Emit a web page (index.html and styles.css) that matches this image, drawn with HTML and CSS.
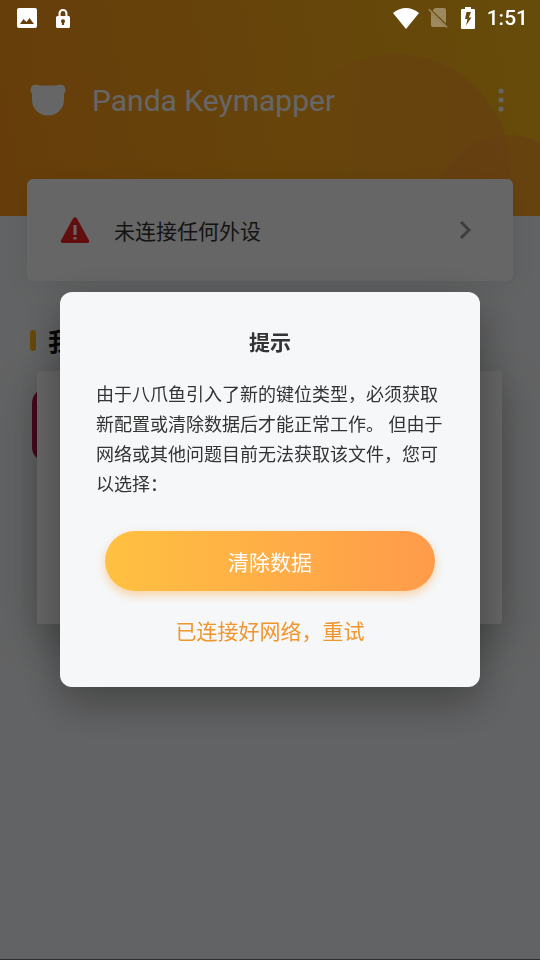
FILE: index.html
```
<!DOCTYPE html>
<html lang="zh-CN">
<head>
<meta charset="utf-8">
<meta name="viewport" content="width=device-width, initial-scale=1">
<title>Panda Keymapper</title>
<link rel="stylesheet" href="styles.css">
</head>
<body>
<div class="app">
  <header class="hero">
    <svg class="hero-art" viewBox="0 0 540 216" preserveAspectRatio="xMaxYMid slice" aria-hidden="true">
      <defs>
        <linearGradient id="orb" x1="0" y1="0" x2="1" y2="0">
          <stop offset="0" stop-color="#ffa028" stop-opacity="0"/>
          <stop offset="0.4" stop-color="#ffa028" stop-opacity=".5"/>
          <stop offset="1" stop-color="#ffa028" stop-opacity=".75"/>
        </linearGradient>
        <linearGradient id="orb2" x1="0" y1="0" x2="1" y2="0">
          <stop offset="0" stop-color="#ff9632" stop-opacity=".6"/>
          <stop offset="1" stop-color="#ffa523" stop-opacity=".8"/>
        </linearGradient>
      </defs>
      <circle cx="396" cy="168" r="114" fill="url(#orb)"/>
      <circle cx="508" cy="208" r="73" fill="url(#orb2)"/>
    </svg>
    <div class="toolbar">
      <svg class="panda" viewBox="0 0 36 32" aria-hidden="true">
        <circle cx="6" cy="6" r="5.500"/><circle cx="30" cy="6" r="5.500"/>
        <path d="M8 1.500H28L34 8V16A16 15.500 0 0 1 2 16V8Z"/>
      </svg>
      <h1 class="brand">Panda Keymapper</h1>
      <button class="more" type="button" aria-label="More">
        <svg viewBox="0 0 6 24"><circle cx="3" cy="3" r="2.500"/><circle cx="3" cy="12" r="2.500"/><circle cx="3" cy="21" r="2.500"/></svg>
      </button>
    </div>
  </header>
  <main class="content">
    <button class="device" type="button">
      <svg class="warn" viewBox="0 0 30 27" aria-hidden="true">
        <path d="M13 1.500Q15-1 17 1.500L28.800 23Q30 26 27 26H3Q0 26 1.200 23Z" fill="#f52323"/>
        <path d="M13.500 8h3v10h-3zM13.500 20h3v2.500h-3z" fill="#fff"/>
      </svg>
      <span class="device-label">未连接任何外设</span>
      <svg class="chevron" viewBox="0 0 12 20" aria-hidden="true"><path d="M2 2l8 8-8 8"/></svg>
    </button>
    <h2 class="section">我的</h2>
    <div class="games">
      <span class="game-icon"></span>
      <div class="sheet"></div>
    </div>
  </main>
</div>

<div class="scrim">
  <section class="dialog" role="dialog" aria-modal="true" aria-labelledby="dialog-title">
    <h2 class="dialog-title" id="dialog-title">提示</h2>
    <p class="dialog-text">由于八爪鱼引入了新的键位类型，必须获取新配置或清除数据后才能正常工作。 但由于网络或其他问题目前无法获取该文件，您可以选择：</p>
    <button class="primary" type="button">清除数据</button>
    <button class="retry" type="button">已连接好网络，重试</button>
  </section>
</div>

<div class="status">
  <svg class="s-image" viewBox="0 0 20 20"><path fill-rule="evenodd" d="M2 0H18Q20 0 20 2V18Q20 20 18 20H2Q0 20 0 18V2Q0 0 2 0ZM3 16H17L12.500 10L9.500 14L6.500 11Z"/></svg>
  <svg class="s-lock" viewBox="0 0 14 19"><path fill-rule="evenodd" d="M2.500 7V4.500a4.500 4.500 0 0 1 9 0V7H12.500Q14 7 14 8.500V17.500Q14 19 12.500 19H1.500Q0 19 0 17.500V8.500Q0 7 1.500 7ZM4.600 7H9.400V4.500a2.400 2.400 0 0 0-4.800 0ZM7 10.200a2 2 0 0 0-1.100 3.700V16H8.100V13.900A2 2 0 0 0 7 10.200Z"/></svg>
  <span class="spacer"></span>
  <svg class="s-wifi" viewBox="0 0 26 21"><path d="M13 21L0 5Q13-5 26 5Z"/></svg>
  <svg class="s-sim" viewBox="0 0 20 20"><path d="M7 0H16Q18 0 18 2V15.500L4.500 2.500ZM3 4.500L17 18.500Q16.500 19 16 19H5Q3 19 3 17Z"/><path d="M.8 1.200L19 19.400" fill="none" stroke="#fff" stroke-width="1.600"/></svg>
  <svg class="s-battery" viewBox="0 0 14 22"><path fill-rule="evenodd" d="M4 2V0H10V2H13Q14 2 14 3V21Q14 22 13 22H1Q0 22 0 21V3Q0 2 1 2ZM5.500 5L4 12H6.500L5 18.500L10.500 10.500H7.800L10 5Z"/></svg>
  <span class="clock">1:51</span>
</div>
</body>
</html>
```
FILE: styles.css
```
* { box-sizing: border-box; }

body {
  margin: 0;
  background: #f5f7f9;
  font-family: Roboto, "Noto Sans CJK SC", sans-serif;
  color: #333;
}

h1, h2, p { margin: 0; }

button {
  border: 0;
  padding: 0;
  background: none;
  font: inherit;
  color: inherit;
  cursor: pointer;
}

svg { display: block; flex: none; }

.app { min-height: 100vh; overflow: hidden; border-bottom: 1px solid #777; }

.hero {
  position: relative;
  height: 216px;
  padding: 72px 36px 0 30px;
  background: linear-gradient(80deg, #ff9919 0%, #ffaa19 50%, #ffbe19 100%);
}

.hero-art {
  position: absolute;
  inset: 0;
  width: 100%;
  height: 100%;
}

.toolbar {
  position: relative;
  display: flex;
  align-items: center;
  height: 56px;
  color: #fff;
}

.panda { width: 36px; height: 32px; fill: #fff; }

.brand {
  flex: 1;
  margin-left: 26px;
  font-size: 30px;
  font-weight: 400;
}

.more svg { width: 6px; height: 24px; fill: #fff; }

.content {
  position: relative;
  margin-top: -37px;
  padding: 0 27px;
}

.device {
  display: flex;
  align-items: center;
  width: 100%;
  height: 102px;
  padding: 0 42px 0 33px;
  border-radius: 6px;
  background: #fff;
  box-shadow: 0 3px 24px rgba(0, 0, 0, .08);
  text-align: left;
}

.warn { width: 30px; height: 27px; }

.device-label { flex: 1; margin-left: 24px; font-size: 21px; }

.chevron { width: 12px; height: 20px; fill: none; stroke: #999; stroke-width: 3; }

.section {
  display: flex;
  align-items: center;
  gap: 12px;
  height: 36px;
  margin: 41px 0 0 3px;
  font-size: 25px;
  font-weight: 700;
  color: #111;
}

.section::before {
  content: "";
  width: 6px;
  height: 21px;
  border-radius: 3px;
  background: #ffb419;
}

.games { position: relative; margin: 13px -16px 0 5px; padding-right: 27px; }

.game-icon {
  position: absolute;
  left: 0;
  top: 17px;
  width: 74px;
  height: 74px;
  border-radius: 15px;
  background: #b4144b;
}

.sheet {
  position: relative;
  height: 253px;
  margin-left: 5px;
  border-radius: 3px;
  background: #fff;
  box-shadow: 0 14px 44px rgba(0, 0, 0, .28);
}

.scrim {
  position: fixed;
  inset: 0;
  display: flex;
  align-items: center;
  justify-content: center;
  padding: 19px 60px 0;
  background: rgba(0, 0, 0, .6);
}

.dialog {
  display: flex;
  flex-direction: column;
  align-items: center;
  width: 100%;
  max-width: 420px;
  padding: 36px 36px 40px;
  border-radius: 12px;
  background: #f5f7f9;
  box-shadow: 0 14px 44px rgba(0, 0, 0, .35);
}

.dialog-title { font-size: 21px; line-height: 30px; font-weight: 700; }

.dialog-text { width: 100%; margin-top: 22px; font-size: 18px; line-height: 30px; }

.primary {
  width: 330px;
  max-width: 100%;
  height: 60px;
  margin-top: 31px;
  border-radius: 30px;
  background: linear-gradient(90deg, #ffc141, #ff9b4b);
  box-shadow: 0 4px 10px rgba(255, 165, 60, .45);
  font-size: 21px;
  color: #fff;
}

.retry { margin-top: 26px; font-size: 21px; line-height: 30px; color: #f0962d; }

.status {
  position: fixed;
  inset: 0 0 auto;
  display: flex;
  align-items: center;
  height: 36px;
  padding: 0 12px 0 17px;
  color: #fff;
}

.status svg { fill: #fff; }

.s-image { width: 20px; height: 20px; }
.s-lock { width: 14px; height: 19px; margin-left: 19px; }
.spacer { flex: 1; }
.s-wifi { width: 26px; height: 21px; }
.s-sim { width: 20px; height: 20px; margin-left: 9px; opacity: .35; }
.s-battery { width: 14px; height: 22px; margin-left: 13px; }
.clock { margin-left: 12px; font-size: 21px; font-weight: 500; }
```
